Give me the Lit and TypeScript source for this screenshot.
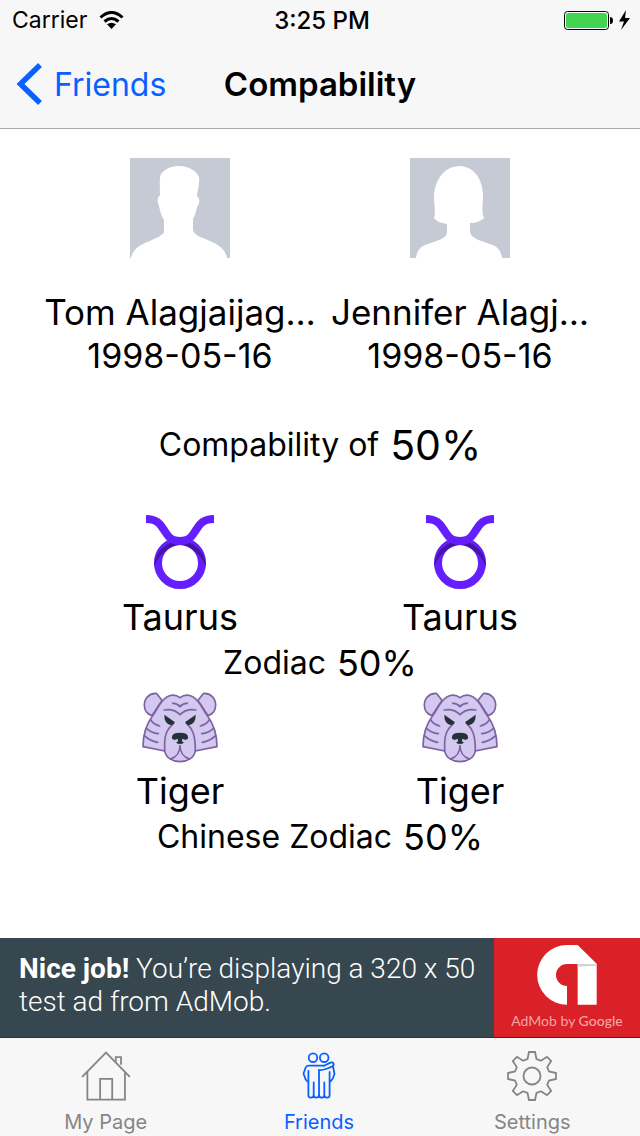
import { LitElement, html, css, svg } from "lit";
import { customElement } from "lit/decorators.js";

const male = svg`<svg class="avatar" viewBox="0 0 100 100" aria-hidden="true">
  <rect width="100" height="100" fill="#c6cad4"/>
  <path fill="#fff" d="M1 100C3 90 12 86 20 83C28 79 34 77 34 73V62C31 58 30 52 29 48C27 44 27 40 30 37C30 30 29 20 31 16C36 10 42 8 49 8C58 8 66 12 69 19C70 26 67 34 67 38C70 40 70 46 67 49C66 54 65 58 63 61V72C64 78 74 80 80 83C90 87 96 93 97 100Z"/>
</svg>`;

const female = svg`<svg class="avatar" viewBox="0 0 100 100" aria-hidden="true">
  <rect width="100" height="100" fill="#c6cad4"/>
  <path fill="#fff" d="M6 100C7 92 11 88 18 86C26 83 36 81 37 75V66C32 65 27 64 24 60C26 53 24 46 24 38C25 22 34 8 50 8C65 9 73 22 73 38C73 46 71 53 74 60C71 63 66 65 60 65V74C61 81 72 83 80 86C87 88 91 92 92 100Z"/>
</svg>`;

const taurus = svg`<svg class="taurus" viewBox="0 0 68 74" aria-hidden="true">
  <circle cx="34" cy="48" r="22" fill="none" stroke="#651fff" stroke-width="8"/>
  <path fill="#4615a3" d="M8 52A26 26 0 1 1 60 52C56 42 50 36 42 32A18 18 0 0 0 26 32C18 36 12 42 8 52Z"/>
  <path fill="none" stroke="#651fff" stroke-width="8" d="M0 4C11 4 14 9 18 15C22 21 24 26 34 26C44 26 46 21 50 15C54 9 57 4 68 4"/>
</svg>`;

const tiger = svg`<svg class="tiger" viewBox="96 37 228 213" aria-hidden="true">
  <g fill="#d3c8ef" stroke="#7e61a0" stroke-width="5" stroke-linecap="round" stroke-linejoin="round">
    <path d="M156 62L139 41C118 40 103 56 103 76C103 92 112 104 126 108ZM264 62L281 41C302 40 317 56 317 76C317 92 308 104 294 108Z"/>
    <path d="M210 54C198 45 184 45 172 51C150 62 143 90 128 108C110 132 99 162 99 201L164 214C167 234 188 246 210 246C232 246 253 234 256 214L321 201C321 162 310 132 292 108C277 90 270 62 248 51C236 45 222 45 210 54Z"/>
    <path fill="none" d="M187 135C172 148 164 166 164 190V214M233 135C248 148 256 166 256 214M210 198C210 216 200 232 182 238M210 198C210 216 220 232 238 238"/>
    <path fill="none" d="M163 91C182 87 196 91 210 105C224 91 238 87 257 91M188 71C198 70 204 74 210 81C216 74 222 70 232 71"/>
    <path fill="none" d="M122 121Q132 135 149 139M109 146Q124 160 145 162M103 168Q120 184 143 188M298 121Q288 135 271 139M311 146Q296 160 275 162M317 168Q300 184 277 188"/>
  </g>
  <path fill="#263238" d="M163 105L194 127Q193 137 182 136Q162 131 163 105ZM257 105L226 127Q227 137 238 136Q258 131 257 105ZM186 172Q186 159 210 159Q234 159 234 172Q235 182 224 180L217 177L216 185L222 189Q210 197 198 189L204 185L203 177L196 180Q185 182 186 172Z"/>
</svg>`;

const house = svg`<svg class="tab-icon" viewBox="243 362 150 153" aria-hidden="true">
  <path fill="none" stroke="currentColor" stroke-width="5.500" d="M245 441L318 367L391 441M261 427V511H376V427M300 511V447H337V511M348 395V381H364V404"/>
</svg>`;

const friends = svg`<svg class="tab-icon" viewBox="0 0 50 50" aria-hidden="true">
  <g fill="none" stroke="currentColor" stroke-width="1.800" stroke-linejoin="round" stroke-linecap="round">
    <circle cx="19" cy="6.700" r="4.300"/><circle cx="30.200" cy="6.700" r="4.300"/>
    <path d="M30 14.700H15Q12.500 14.700 11.700 16.500L9.500 22.500L11.700 28.500L13.500 30.500"/>
    <path d="M14.400 20V44.500Q14.400 46.600 17 46.600Q19.700 46.600 19.700 44V31.500M19.700 44Q19.700 46.600 22.300 46.600Q25 46.600 25 44V19Q29 19.200 32 18L38.500 15.300Q40.300 14 39.300 12.200Q38.300 11 36.500 11.600L30 14.700"/>
    <path d="M25 44Q25 46.600 27.700 46.600Q30.300 46.600 30.300 44V31.500M30.300 44Q30.300 46.600 33 46.600Q35.600 46.600 35.600 44.500V21M39 15.500L40.500 23L38.800 27.500L36.500 30.500"/>
  </g>
</svg>`;

const gear = svg`<svg class="tab-icon" viewBox="-25 -25 50 50" aria-hidden="true">
  <g fill="none" stroke="currentColor" stroke-width="1.800" stroke-linejoin="miter">
    <circle r="8.500"/>
    <path d="M-3 -24H3L4.500 -17L9 -15.200L15 -19.200L19.200 -15L15.200 -9L17 -4.500L24 -3V3L17 4.500L15.200 9L19.200 15L15 19.200L9 15.200L4.500 17L3 24H-3L-4.500 17L-9 15.200L-15 19.200L-19.200 15L-15.200 9L-17 4.500L-24 3V-3L-17 -4.500L-15.200 -9L-19.200 -15L-15 -19.200L-9 -15.200L-4.500 -17Z"/>
  </g>
</svg>`;

const people = [
  { name: "Tom Alagjaijag…", born: "1998-05-16", avatar: male },
  { name: "Jennifer Alagj…", born: "1998-05-16", avatar: female },
];

const tabs = [
  { label: "My Page", icon: house, active: false },
  { label: "Friends", icon: friends, active: true },
  { label: "Settings", icon: gear, active: false },
];

@customElement("app-root")
export class AppRoot extends LitElement {
  static styles = css`
    :host {
      display: flex;
      flex-direction: column;
      min-height: 100vh;
      background: #fff;
      color: #000;
      font-family: Inter, "Liberation Sans", sans-serif;
    }
    * { box-sizing: border-box; }
    svg { display: block; flex: none; }
    h1, h2, p { margin: 0; font-weight: 400; }
    header { background: #f7f7f7; border-bottom: 1px solid #a8a8aa; }
    .status, .nav {
      display: grid;
      grid-template-columns: 1fr auto 1fr;
      align-items: center;
    }
    .status { height: 40px; padding: 0 8px 0 12px; font-size: 23px; }
    .carrier { display: flex; align-items: center; gap: 12px; }
    .wifi { width: 25px; height: 18px; }
    .time { font-size: 24px; font-weight: 500; }
    .power { display: flex; justify-content: flex-end; align-items: center; }
    .battery { width: 68px; height: 20px; }
    .nav { height: 88px; padding: 0 16px; }
    .back {
      display: flex;
      align-items: center;
      gap: 12px;
      color: #0a60ff;
      font-size: 32px;
      text-decoration: none;
    }
    .chevron { width: 26px; height: 42px; }
    .nav h1 { font-size: 33px; font-weight: 600; }
    main { flex: 1; padding: 29px 40px; }
    .pair {
      display: grid;
      grid-template-columns: repeat(2, minmax(0, 1fr));
    }
    .cell {
      display: flex;
      flex-direction: column;
      align-items: center;
      white-space: nowrap;
    }
    .avatar { width: 100px; height: 100px; margin-bottom: 31px; }
    .name { font-size: 35px; line-height: 46px; }
    .sign { font-size: 36px; line-height: 46px; }
    .born { font-size: 34px; line-height: 42px; }
    .score {
      display: flex;
      justify-content: center;
      align-items: center;
      gap: 11px;
      font-size: 32px;
      line-height: 46px;
    }
    .score strong { font-weight: 400; font-size: 36px; }
    .total { margin: 45px 0 47px; }
    .total strong { font-size: 41px; }
    .taurus { width: 68px; height: 74px; margin-bottom: 5px; }
    .tiger { width: 76px; height: 71px; margin: 6px 0 5px; }
    .ad {
      display: flex;
      height: 100px;
      background: #37474f;
      border-bottom: 1px solid #263238;
      color: #fff;
      font-family: Roboto, sans-serif;
      text-decoration: none;
    }
    .ad-text {
      flex: 1;
      padding: 14px 0 0 19px;
      font-size: 28px;
      font-weight: 300;
      line-height: 33px;
    }
    .ad-text b { font-weight: 700; }
    .ad-brand {
      width: 146px;
      background: #db2128;
      display: flex;
      flex-direction: column;
      align-items: center;
      padding-top: 7px;
      gap: 6px;
      color: #f2a4a6;
      font-family: Lato, sans-serif;
      font-size: 14px;
      line-height: 20px;
    }
    .ad-brand b { font-weight: 500; }
    .admob { width: 60px; height: 60px; }
    .tabs {
      display: grid;
      grid-template-columns: repeat(3, 1fr);
      height: 98px;
      background: #f7f7f7;
    }
    .tab {
      display: flex;
      flex-direction: column;
      align-items: center;
      gap: 8px;
      padding: 13px 2px 0 0;
      color: #858585;
      font-size: 20px;
      line-height: 26px;
      text-decoration: none;
    }
    .tab.active { color: #0a60ff; }
    .tab-icon { width: 50px; height: 50px; }
  `;

  render() {
    return html`
      <header>
        <div class="status">
          <span class="carrier">Carrier
            <svg class="wifi" viewBox="0 0 25 18" aria-hidden="true">
              <path fill="none" stroke="#000" stroke-width="3" d="M1.500 6.500Q12.500 -3.500 23.500 6.500M5.500 10.500Q12.500 4.500 19.500 10.500"/>
              <path d="M8 13.300Q12.500 10 17 13.300L12.500 18Z"/>
            </svg>
          </span>
          <span class="time">3:25 PM</span>
          <span class="power">
            <svg class="battery" viewBox="0 0 68 20" aria-label="Battery charging">
              <rect x="0.500" y="1.500" width="44" height="18" rx="3" fill="#fff" stroke="#000"/>
              <rect x="2" y="3" width="41" height="15" rx="2" fill="#43d551"/>
              <path d="M46 7Q49 7 49 10.500Q49 14 46 14Z"/>
              <path d="M62 0L55 11.500H60L57 20L66 8H61Z"/>
            </svg>
          </span>
        </div>
        <nav class="nav">
          <a class="back" href="#friends">
            <svg class="chevron" viewBox="0 0 26 42" aria-hidden="true">
              <path fill="none" stroke="currentColor" stroke-width="5.500" d="M24 2L4.500 21L24 40"/>
            </svg>Friends</a>
          <h1>Compability</h1>
        </nav>
      </header>
      <main>
        <section class="pair">
          ${people.map((p) => html`<div class="cell">${p.avatar}
            <h2 class="name">${p.name}</h2>
            <p class="born">${p.born}</p>
          </div>`)}
        </section>
        <p class="score total">Compability of <strong>50%</strong></p>
        <section class="pair">
          ${people.map(() => html`<div class="cell">${taurus}<p class="sign">Taurus</p></div>`)}
        </section>
        <p class="score">Zodiac <strong>50%</strong></p>
        <section class="pair">
          ${people.map(() => html`<div class="cell">${tiger}<p class="sign">Tiger</p></div>`)}
        </section>
        <p class="score">Chinese Zodiac <strong>50%</strong></p>
      </main>
      <a class="ad" href="#ad">
        <span class="ad-text"><b>Nice job!</b> You’re displaying a 320 x 50 test ad from AdMob.</span>
        <span class="ad-brand">
          <svg class="admob" viewBox="651 45 180 180" aria-hidden="true">
            <path fill="#fff" d="M741 224V168A33 33 0 0 1 741 102H773V224H830V101L773 45H741A89.500 89.500 0 0 0 741 224Z"/>
            <path fill="#d5d5d5" d="M773 102H830V107L773 110Z"/>
          </svg>
          <span>AdMob by <b>Google</b></span>
        </span>
      </a>
      <nav class="tabs">
        ${tabs.map((t) => html`<a class="tab ${t.active ? "active" : ""}" href="#tab">${t.icon}<span>${t.label}</span></a>`)}
      </nav>
    `;
  }
}
